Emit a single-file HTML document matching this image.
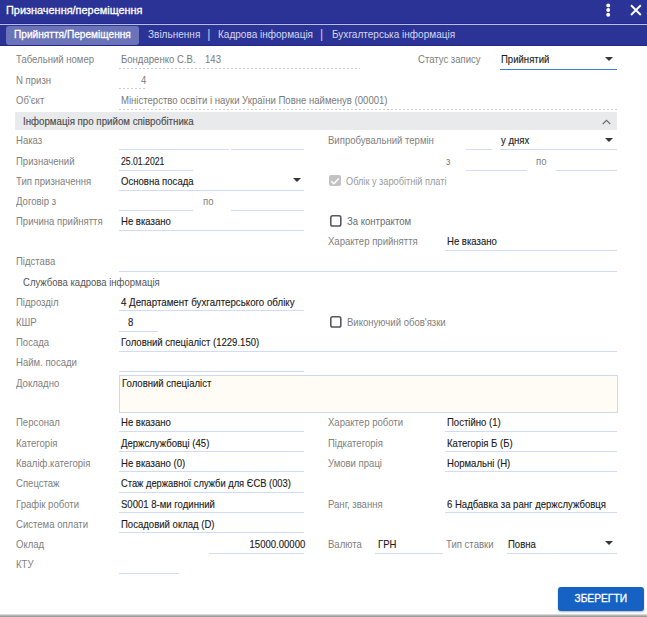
<!DOCTYPE html>
<html lang="uk"><head><meta charset="utf-8"><title>Призначення/переміщення</title>
<style>
html,body{margin:0;padding:0}
body{width:647px;height:617px;position:relative;overflow:hidden;background:#fff;font-family:"Liberation Sans",sans-serif;font-size:10.5px;line-height:14px;color:#222}
.hdr{position:absolute;left:0;top:0;width:647px;height:46px;background:#2b3496}
.hl{position:absolute;left:0;top:24px;width:647px;height:1px;background:#b9bde3}
.hd1{position:absolute;left:0;top:23px;width:647px;height:1px;background:#222b8c}
.hd2{position:absolute;left:0;top:45px;width:647px;height:1px;background:#1f288a}
.tab{position:absolute;left:6px;top:26px;width:133px;height:18.5px;border-radius:3px;background:#6a72b8}
.t{position:absolute;white-space:nowrap;transform:scaleX(.91);transform-origin:0 50%;height:14px}
.t.r{transform-origin:100% 50%}
.lab{color:#808080}
.lab2{color:#6c6c6c}
.dis{color:#9a9a9a}
.ro{color:#7a7a7a}
.val{color:#1a1a1a;-webkit-text-stroke:.12px #1a1a1a}
.sect{color:#4c4c4c;transform:scaleX(.925);-webkit-text-stroke:.15px #4c4c4c}
.u,.uf,.d{position:absolute;height:1px;display:block}
.u{background:#cfdcf4}
.uf{background:#3f7fd6}
.d{background:repeating-linear-gradient(90deg,#cccccc 0 2px,transparent 2px 4px)}
.arr{position:absolute;width:0;height:0;border-left:4.2px solid transparent;border-right:4.2px solid transparent;border-top:4.3px solid #363636}
.sec{position:absolute;left:15px;top:112px;width:602px;height:18px;background:#e9eaeb;border-radius:1px}
.chev{position:absolute;left:602px;top:119px}
.cb{position:absolute;width:12px;height:12px}
.cb svg{display:block}
.cbg{position:absolute;width:11.6px;height:11.6px;border-radius:2px;background:#c2c2c2}
.cbg svg{display:block}
.ta{position:absolute;left:119px;top:375px;width:496.5px;height:35.5px;border:1px solid #d0d9e8;background:#fffcf6}
.btn{position:absolute;left:558px;top:586.5px;width:85.5px;height:24.5px;border-radius:3px;background:#1662c4;box-shadow:0 1px 2px rgba(0,0,0,.3)}
.btn span{position:absolute;left:0;width:100%;top:4.7px;text-align:center;color:#fff;-webkit-text-stroke:.3px #fff;font-size:10.5px;transform:scaleX(.975)}
.bot{position:absolute;left:0;top:614px;width:647px;height:3px;background:linear-gradient(#ececec,#b4b4b4 50%,#909090)}
.title{position:absolute;left:5.7px;top:4.1px;color:#fff;font-size:10.4px;-webkit-text-stroke:.3px #fff;white-space:nowrap;transform:scaleX(1.05);transform-origin:0 50%}
.tt{position:absolute;top:27.2px;color:#d5d8f2;font-size:10.5px;white-space:nowrap;transform:scaleX(.955);transform-origin:0 50%}
.tt.p{font-size:12.3px;top:26.6px;color:#c4c8ec;transform:none}
.tt.a{color:#fff;-webkit-text-stroke:.3px #fff;transform:scaleX(.965)}
.dots{position:absolute;left:605px;top:2px;overflow:visible}
.x{position:absolute;left:629px;top:3px}
</style></head><body>
<div class="hdr"></div><i class="hd1"></i><i class="hl"></i><i class="hd2"></i>
<div class="tab"></div>
<span class="title">Призначення/переміщення</span>
<svg class="dots" width="6" height="16" viewBox="0 0 6 16"><circle cx="3.2" cy="3.4" r="1.95" fill="#fff"/><circle cx="3.2" cy="8.05" r="1.95" fill="#fff"/><circle cx="3.2" cy="12.7" r="1.95" fill="#fff"/></svg>
<svg class="x" width="14" height="14" viewBox="0 0 14 14"><path d="M2 2.3 L11.8 12 M11.8 2.3 L2 12" stroke="#fff" stroke-width="1.9" fill="none"/></svg>
<span class="tt a" style="left:14px">Прийняття/Переміщення</span>
<span class="tt" style="left:148px">Звільнення</span>
<span class="tt p" style="left:207.3px">|</span>
<span class="tt" style="left:218px">Кадрова інформація</span>
<span class="tt p" style="left:319.9px">|</span>
<span class="tt" style="left:331.5px">Бухгалтерська інформація</span>
<span class="t lab" style="left:15.6px;top:52.2px;">Табельний номер</span>
<span class="t ro" style="left:121.2px;top:52.2px;">Бондаренко С.В.</span>
<span class="t ro" style="left:204.8px;top:52.2px;">143</span>
<i class="d" style="left:119px;width:241px;top:68px"></i>
<span class="t lab" style="left:418px;top:52.2px;">Статус запису</span>
<span class="t val" style="left:501px;top:52.2px;">Прийнятий</span>
<i class="uf" style="left:500px;width:117px;top:69px"></i>
<b class="arr" style="left:604.8px;top:57.3px"></b>
<span class="t lab" style="left:15.6px;top:72.9px;">N призн</span>
<span class="t ro" style="left:141px;top:72.9px;">4</span>
<i class="d" style="left:119px;width:26.5px;top:88px"></i>
<span class="t lab" style="left:15.6px;top:92.8px;">Об'єкт</span>
<span class="t ro" style="left:121.2px;top:92.8px;">Міністерство освіти і науки України Повне найменув (00001)</span>
<i class="d" style="left:119px;width:498px;top:109px"></i>
<div class="sec"></div>
<span class="t sect" style="left:23px;top:113.5px;">Інформація про прийом співробітника</span>
<svg class="chev" width="9" height="6" viewBox="0 0 9 6"><path d="M0.8 5 L4.5 1.3 L8.2 5" fill="none" stroke="#6a6a6a" stroke-width="1.1"/></svg>
<span class="t lab" style="left:15.6px;top:133.1px;">Наказ</span>
<i class="u" style="left:119px;width:110px;top:149px"></i>
<i class="u" style="left:231px;width:73px;top:149px"></i>
<span class="t lab" style="left:328px;top:133.1px;">Випробувальний термін</span>
<i class="u" style="left:466px;width:26px;top:149px"></i>
<span class="t val" style="left:501px;top:133.1px;">у днях</span>
<i class="u" style="left:500px;width:117px;top:149px"></i>
<b class="arr" style="left:604.8px;top:137.9px"></b>
<span class="t lab" style="left:15.6px;top:153.8px;">Призначений</span>
<span class="t val" style="left:121.2px;top:153.8px;transform:scaleX(.825)">25.01.2021</span>
<i class="u" style="left:119px;width:74px;top:170px"></i>
<span class="t lab" style="left:446px;top:153.8px;">з</span>
<i class="u" style="left:466px;width:61px;top:170px"></i>
<span class="t lab" style="left:536px;top:153.8px;">по</span>
<i class="u" style="left:556px;width:61px;top:170px"></i>
<span class="t lab" style="left:15.6px;top:174.0px;">Тип призначення</span>
<span class="t val" style="left:121.2px;top:174.0px;">Основна посада</span>
<i class="u" style="left:119px;width:185px;top:190px"></i>
<b class="arr" style="left:292.8px;top:178.3px"></b>
<b class="cbg" style="left:329.3px;top:174.7px"><svg width="12" height="12" viewBox="0 0 12 12"><path d="M2.3 6.2 L4.8 8.7 L9.8 3.5" fill="none" stroke="#fff" stroke-width="1.5"/></svg></b>
<span class="t dis" style="left:346.3px;top:174.0px;transform:scaleX(.875)">Облік у заробітній платі</span>
<span class="t lab" style="left:15.6px;top:194.1px;">Договір з</span>
<i class="u" style="left:119px;width:74px;top:210px"></i>
<span class="t lab" style="left:203px;top:194.1px;">по</span>
<i class="u" style="left:231px;width:73px;top:210px"></i>
<span class="t lab" style="left:15.6px;top:214.3px;">Причина прийняття</span>
<span class="t val" style="left:121.2px;top:214.3px;">Не вказано</span>
<i class="u" style="left:119px;width:185px;top:230px"></i>
<b class="cb" style="left:329.5px;top:215.1px"><svg width="12" height="12" viewBox="0 0 12 12"><rect x="0.8" y="0.8" width="10" height="10.2" rx="1.8" fill="#fff" stroke="#55555b" stroke-width="1.55"/></svg></b>
<span class="t lab2" style="left:346.5px;top:214.3px;">За контрактом</span>
<span class="t lab" style="left:328px;top:234.4px;">Характер прийняття</span>
<span class="t val" style="left:447px;top:234.4px;">Не вказано</span>
<i class="u" style="left:445px;width:172px;top:250px"></i>
<span class="t lab" style="left:15.6px;top:253.9px;">Підстава</span>
<i class="u" style="left:119px;width:498px;top:271px"></i>
<span class="t sect" style="left:23px;top:274.8px;transform:scaleX(.908);color:#555;-webkit-text-stroke:0">Службова кадрова інформація</span>
<span class="t lab" style="left:15.6px;top:294.9px;">Підрозділ</span>
<span class="t val" style="left:121.2px;top:294.9px;transform:scaleX(.925)">4 Департамент бухгалтерського обліку</span>
<i class="u" style="left:119px;width:185px;top:310px"></i>
<span class="t lab" style="left:15.6px;top:315.1px;">КШР</span>
<span class="t val" style="left:128px;top:315.1px;">8</span>
<i class="u" style="left:119px;width:39px;top:331px"></i>
<b class="cb" style="left:329.5px;top:315.9px"><svg width="12" height="12" viewBox="0 0 12 12"><rect x="0.8" y="0.8" width="10" height="10.2" rx="1.8" fill="#fff" stroke="#55555b" stroke-width="1.55"/></svg></b>
<span class="t lab" style="left:346.5px;top:315.1px;">Виконуючий обов'язки</span>
<span class="t lab" style="left:15.6px;top:335.2px;">Посада</span>
<span class="t val" style="left:121.2px;top:335.2px;">Головний спеціаліст (1229.150)</span>
<i class="u" style="left:119px;width:498px;top:351px"></i>
<span class="t lab" style="left:15.6px;top:355.4px;">Найм. посади</span>
<i class="u" style="left:119px;width:185px;top:371px"></i>
<span class="t lab" style="left:15.6px;top:375.6px;">Докладно</span>
<div class="ta"></div>
<span class="t val" style="left:122.3px;top:375.6px;">Головний спеціаліст</span>
<span class="t lab" style="left:15.6px;top:415.3px;">Персонал</span>
<span class="t val" style="left:121.2px;top:415.3px;">Не вказано</span>
<i class="u" style="left:119px;width:185px;top:431px"></i>
<span class="t lab" style="left:328px;top:415.3px;">Характер роботи</span>
<span class="t val" style="left:447px;top:415.3px;">Постійно (1)</span>
<i class="u" style="left:445px;width:172px;top:431px"></i>
<span class="t lab" style="left:15.6px;top:435.7px;">Категорія</span>
<span class="t val" style="left:121.2px;top:435.7px;">Держслужбовці (45)</span>
<i class="u" style="left:119px;width:185px;top:451px"></i>
<span class="t lab" style="left:328px;top:435.7px;">Підкатегорія</span>
<span class="t val" style="left:447px;top:435.7px;">Категорія Б (Б)</span>
<i class="u" style="left:445px;width:172px;top:451px"></i>
<span class="t lab" style="left:15.6px;top:456.2px;">Кваліф.категорія</span>
<span class="t val" style="left:121.2px;top:456.2px;">Не вказано (0)</span>
<i class="u" style="left:119px;width:185px;top:471px"></i>
<span class="t lab" style="left:328px;top:456.2px;">Умови праці</span>
<span class="t val" style="left:447px;top:456.2px;">Нормальні (Н)</span>
<i class="u" style="left:445px;width:172px;top:471px"></i>
<span class="t lab" style="left:15.6px;top:476.4px;">Спецстаж</span>
<span class="t val" style="left:121.2px;top:476.4px;transform:scaleX(.89)">Стаж державної служби для ЄСВ (003)</span>
<i class="u" style="left:119px;width:185px;top:492px"></i>
<span class="t lab" style="left:15.6px;top:496.5px;">Графік роботи</span>
<span class="t val" style="left:121.2px;top:496.5px;">S0001 8-ми годинний</span>
<i class="u" style="left:119px;width:185px;top:512px"></i>
<span class="t lab" style="left:328px;top:496.5px;">Ранг, звання</span>
<span class="t val" style="left:447px;top:496.5px;">6 Надбавка за ранг держслужбовця</span>
<i class="u" style="left:445px;width:172px;top:512px"></i>
<span class="t lab" style="left:15.6px;top:516.7px;">Система оплати</span>
<span class="t val" style="left:121.2px;top:516.7px;">Посадовий оклад (D)</span>
<i class="u" style="left:119px;width:185px;top:532px"></i>
<span class="t lab" style="left:15.6px;top:536.8px;">Оклад</span>
<span class="t val r" style="right:342px;top:536.8px;">15000.00000</span>
<i class="u" style="left:209px;width:95px;top:553px"></i>
<span class="t lab" style="left:328px;top:536.8px;">Валюта</span>
<span class="t val" style="left:377.5px;top:536.8px;">ГРН</span>
<i class="u" style="left:375px;width:68px;top:553px"></i>
<span class="t lab" style="left:446px;top:536.8px;">Тип ставки</span>
<span class="t val" style="left:508px;top:536.8px;">Повна</span>
<i class="u" style="left:507px;width:110px;top:553px"></i>
<b class="arr" style="left:604.8px;top:541.1px"></b>
<span class="t lab" style="left:15.6px;top:557.0px;">КТУ</span>
<i class="u" style="left:119px;width:60px;top:573px"></i>
<div class="btn"><span>ЗБЕРЕГТИ</span></div>
<div class="bot"></div>
</body></html>
